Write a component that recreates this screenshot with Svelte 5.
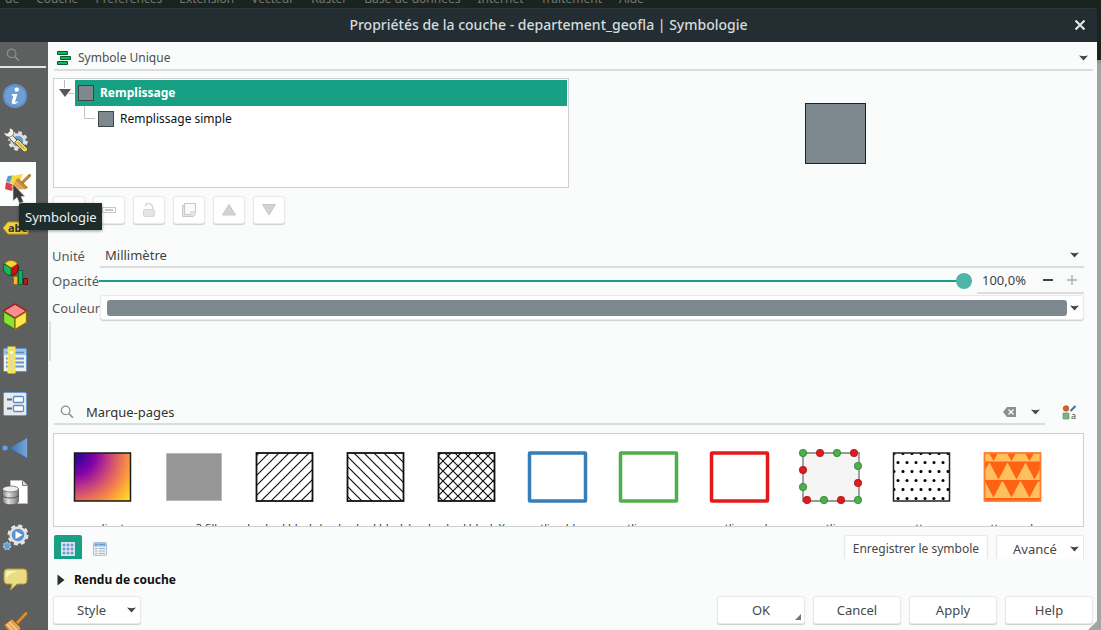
<script>
  const menus = ['de', 'Couche', 'Préférences', 'Extension', 'Vecteur', 'Raster', 'Base de données', 'Internet', 'Traitement', 'Aide'];
  const tabs = [
    ['info', 'Information'],
    ['source', 'Source'],
    ['symbology', 'Symbologie'],
    ['labels', 'Étiquettes'],
    ['diagrams', 'Diagrammes'],
    ['view3d', 'Vue 3D'],
    ['fields', 'Champs'],
    ['form', 'Formulaire'],
    ['joins', 'Jointures'],
    ['storage', 'Stockage auxiliaire'],
    ['actions', 'Actions'],
    ['display', 'Infobulles'],
    ['rendering', 'Rendu']
  ];
  const tools = [
    ['add', 'Ajouter'],
    ['remove', 'Supprimer'],
    ['lock', 'Verrouiller'],
    ['copy', 'Dupliquer'],
    ['up', 'Monter'],
    ['down', 'Descendre']
  ];
  const symbols = [
    ['gradient', 'gradient'],
    ['gray', 'gray 3 fill'],
    ['slash', 'hashed black /'],
    ['back', 'hashed black \\'],
    ['cross', 'hashed black X'],
    ['blue', 'outline blue'],
    ['green', 'outline green'],
    ['red', 'outline red'],
    ['markers', 'outline'],
    ['dots', 'pattern'],
    ['triangles', 'pattern zebra']
  ];
  const outlines = { blue: '#377eb8', green: '#4daf4a', red: '#e31a1c' };
  const greenDots = [[5, 5], [39, 5], [60, 18], [5, 39], [26, 52], [60, 52]];
  const redDots = [[22, 5], [56, 5], [60, 35], [5, 22], [9, 52], [43, 52]];
  let current = $state('symbology');
  let unit = $state('Millimètre');
  let opacity = $state(100);
  let search = $state('Marque-pages');
  let opacityText = $derived(Number(opacity).toFixed(1).replace('.', ',') + '%');
</script>

{#snippet arrow()}
  <svg class="arrow" width="9" height="6" viewBox="0 0 9 6" aria-hidden="true"><path d="M0 .5 4.5 1.2 9 .5 4.5 5.5z" fill="#454545" /></svg>
{/snippet}

{#snippet magnifier(color)}
  <svg width="14" height="14" viewBox="0 0 14 14" fill="none" stroke={color} aria-hidden="true"><circle cx="5.6" cy="5.4" r="4.3" stroke-width="1.2" /><path d="m8.8 8.6 4.2 4.2" stroke-width="1.5" /></svg>
{/snippet}

{#snippet tabIcon(name)}
  <svg width="30" height="28" viewBox="0 0 30 28" aria-hidden="true">
    {#if name === 'info'}
      <circle cx="14" cy="14" r="12" fill="#6d9fd6" />
      <circle cx="14" cy="14" r="11" fill="none" stroke="#5288c4" />
      <circle cx="15.8" cy="7.6" r="2.2" fill="#fff" />
      <path d="M11 12h5.4l-2.2 7.6c-.1.9.7.7 2-.4l.8.8c-2 2.4-6.800 3.300-6.200-.6l1.600-5.600H10.600z" fill="#fff" />
    {:else if name === 'source'}
      <circle cx="17" cy="15" r="8.500" fill="none" stroke="#e4e4e4" stroke-width="2.500" stroke-dasharray="3.700 2.980" />
      <circle cx="17" cy="15" r="6.500" fill="#6b9bd3" stroke="#dedede" stroke-width="2.500" />
      <path d="m7.500 8 9 10" stroke="#444" stroke-width="5" />
      <path d="m7.500 8 9 10" stroke="#efefeb" stroke-width="3.600" />
      <path d="M8 2.200C12 2 14 5.500 12 9c-2 3-7 2.500-8.300-.5L2.500 6l3.500 1.500L8.800 5z" fill="#f2f2ee" stroke="#4a4a4a" stroke-width=".6" />
      <path d="m13.500 16.500 3.500-3.500 9.500 9.500-.5 3-3 .5z" fill="#efd673" stroke="#5f5020" stroke-width=".9" />
      <path d="m16.500 16 7 7" stroke="#a98c35" />
    {:else if name === 'symbology'}
      <path d="m7 6 5-.5L9 13l-4-2z" fill="#5b9bd5" />
      <path d="M11 6 22 4l-5 12-8-3z" fill="#f5da3c" />
      <path d="m5 12 8 3-2 6-7-2z" fill="#de3c49" />
      <path d="M21 13 28.500 5.500" stroke="#a86f28" stroke-width="3" stroke-linecap="round" />
      <path d="M21 13 28.500 5.500" stroke="#c98f47" stroke-width="1.500" stroke-linecap="round" />
      <path d="m17 8.500 9.500 9-2.500 1.500-9-8z" fill="#c98b3d" stroke="#8e5d1e" stroke-width=".6" />
      <path d="m15 10.500 9 8.500-9 1-5-3z" fill="#e2a755" />
    {:else if name === 'labels'}
      <path d="M2 14 7 8h20v12H7z" fill="#f2d43c" stroke="#c29a1c" />
      <text x="7" y="18" font-size="11" font-weight="700" fill="#333">abc</text>
    {:else if name === 'diagrams'}
      <circle cx="10" cy="10" r="7.500" fill="#cc1016" stroke="#54100c" />
      <path d="M10 10 3.500 6A7.500 7.500 0 0 1 16.500 6z" fill="#fad33b" stroke="#86670c" stroke-width=".8" />
      <path d="M10 10V17.500A7.500 7.500 0 0 1 3.500 6z" fill="#16b95c" stroke="#0a5a2c" stroke-width=".8" />
      <path d="M12.500 18.500h4v8h-4z" fill="#fab52d" stroke="#9c6711" />
      <path d="M17.500 12.500h4v14h-4z" fill="#0db35f" stroke="#07693a" />
      <path d="M22.500 20.500h4v6h-4z" fill="#c31420" stroke="#6e0a10" />
    {:else if name === 'view3d'}
      <path d="m14 2 11.500 7L14 16 2.500 9z" fill="#f78d91" stroke="#a40d13" stroke-width="1.300" />
      <path d="M2.500 9.500 14 16.500v11L2.500 20.500z" fill="#8ae234" stroke="#39780b" stroke-width="1.300" />
      <path d="M25.500 9.500 14 16.500v11l11.500-7z" fill="#fbe74e" stroke="#8c6d0b" stroke-width="1.300" />
    {:else if name === 'fields'}
      <rect x="2.500" y="2.500" width="23" height="23" rx="1" fill="#eef0f0" stroke="#5f93cb" />
      <path d="M3 3h22v6H3z" fill="#9fc5e8" />
      <path d="M5 6.500h18" stroke="#5a8ac0" stroke-width="1.500" />
      <path d="M5 12.500h18M5 16.500h18M5 20.500h18" stroke="#6b94c4" stroke-width="1.800" />
      <path d="M7.500 1.500h6v25h-6z" fill="#e7dc9b" stroke="#f6ea4b" stroke-width="2" />
      <circle cx="10.500" cy="6.500" r="1.500" fill="#fff" />
    {:else if name === 'form'}
      <rect x="2.500" y="2.500" width="23" height="23" rx="1.500" fill="#e9eaea" stroke="#6e9bcd" />
      <path d="M6 9.500h5M6 18.500h5" stroke="#4b6a8f" stroke-width="2" />
      <rect x="12.500" y="6.500" width="10" height="6" rx="1" fill="#fff" stroke="#5b8cc4" stroke-width="1.300" />
      <rect x="12.500" y="15.500" width="10" height="6" rx="1" fill="#fff" stroke="#5b8cc4" stroke-width="1.300" />
    {:else if name === 'joins'}
      <circle cx="4" cy="14" r="2.800" fill="#6fa0d6" stroke="#3d6fa8" stroke-width=".6" />
      <path d="M8.500 14 26.500 3.500v21z" fill="url(#joinFill)" stroke="#3b6ca4" stroke-width=".8" />
    {:else if name === 'storage'}
      <path d="M9.500 2.500h12l5 5v18h-17z" fill="#fff" stroke="#b9b9b9" />
      <path d="M21.500 2.500v5h5" fill="#ddd" stroke="#777" />
      <path d="M1.500 11v12c0 5 16 5 16 0V11z" fill="url(#dbFill)" stroke="#555" stroke-width=".8" />
      <ellipse cx="9.500" cy="11" rx="8" ry="3" fill="#eee" stroke="#666" stroke-width=".8" />
      <path d="M1.500 17c0 4 16 4 16 0" fill="none" stroke="#555" />
    {:else if name === 'actions'}
      <circle cx="17" cy="13" r="9" fill="none" stroke="#e6e6e6" stroke-width="3" stroke-dasharray="4 3.070" />
      <circle cx="17" cy="13" r="7.500" fill="#5d91cd" stroke="#e2e2e2" stroke-width="2.500" />
      <path d="m14.500 9 7 4-7 4z" fill="#fff" />
      <circle cx="6" cy="24" r="3.500" fill="#6a9bd1" stroke="#a8c5e4" stroke-width="1.500" stroke-dasharray="2 1" />
    {:else if name === 'display'}
      <path d="M6 3h17q3 0 3 4v7q0 4-3 4h-7l-6.500 6 1.500-6H6q-3 0-3-4V7q0-4 3-4z" fill="#e9dc83" stroke="#b29d36" />
      <path d="M5 13V8q0-3 3-3h12q-11 0-15 8z" fill="#fff9d6" opacity=".75" />
    {:else}
      <path d="M16.500 12.500 25 3.500" stroke="#b56a1c" stroke-width="3.500" stroke-linecap="round" />
      <path d="M16.500 12.500 25 3.500" stroke="#e99b42" stroke-width="1.800" stroke-linecap="round" />
      <path d="m11 9 9 9-6 8Q8 22 3 15z" fill="#e5a050" stroke="#9a5c18" />
      <path d="m8 12 9 9M6 14l8 9" stroke="#f8d19b" stroke-width="1.300" />
    {/if}
  </svg>
{/snippet}

{#snippet toolIcon(name)}
  <svg width="16" height="16" viewBox="0 0 16 16" fill="#e4e5e5" stroke="#c6c8c8" aria-hidden="true">
    {#if name === 'add'}
      <path d="M6 1.500h4V6h4.500v4H10v4.500H6V10H1.500V6H6z" />
    {:else if name === 'remove'}
      <path d="M1.500 5.500h13v5h-13z" fill="#fff" /><path d="M4 8h8" stroke-width="2" />
    {:else if name === 'lock'}
      <path d="M4.500 4.500c0-5 8-4 7 3" fill="none" stroke="#d6d8d8" stroke-width="1.500" /><rect x="2.500" y="7.500" width="11" height="7" rx="1.500" stroke="#d6d8d8" />
    {:else if name === 'copy'}
      <path d="M1.500 3.500v11h11v-2h-9v-9z" /><path d="M3.500 1.500h11v11h-11z" fill="#fafafa" /><path d="M9.500 9.500h4.500v4H9.500z" stroke="#dcdede" />
    {:else if name === 'up'}
      <path d="M8 2.500 14.500 13h-13z" fill="#d2d4d4" />
    {:else}
      <path d="M8 13 14.500 2.500h-13z" fill="#d2d4d4" />
    {/if}
  </svg>
{/snippet}

<svg class="defs" width="0" height="0" aria-hidden="true">
  <defs>
    <linearGradient id="joinFill"><stop offset="0" stop-color="#3f74b0" /><stop offset="1" stop-color="#76a7dc" /></linearGradient>
    <linearGradient id="dbFill"><stop offset="0" stop-color="#777" /><stop offset=".35" stop-color="#e4e4e4" /><stop offset="1" stop-color="#777" /></linearGradient>
    <radialGradient id="plasma" gradientUnits="userSpaceOnUse" cx="4" cy="6" r="71">
      <stop offset="0" stop-color="#1b0a8c" /><stop offset=".13" stop-color="#47039f" /><stop offset=".3" stop-color="#8404a7" />
      <stop offset=".46" stop-color="#b93389" /><stop offset=".6" stop-color="#dc5e66" /><stop offset=".74" stop-color="#f48849" />
      <stop offset=".87" stop-color="#fdb32f" /><stop offset="1" stop-color="#f7e225" />
    </radialGradient>
    <pattern id="slash" width="10" height="10" patternUnits="userSpaceOnUse" x="4" y="8"><path d="M-1 11 11-1M-1 1 1-1M9 11l2-2" stroke="#111" stroke-width="1.200" /></pattern>
    <pattern id="back" width="10" height="10" patternUnits="userSpaceOnUse" x="4" y="8"><path d="M-1-1 11 11M9-1l2 2M-1 9l2 2" stroke="#111" stroke-width="1.200" /></pattern>
    <pattern id="dots" width="9" height="18" patternUnits="userSpaceOnUse" x="4" y="5"><circle cx="5" cy="9.500" r="1.500" /><circle cx="1" cy=".5" r="1.500" /><circle cx="10" cy=".5" r="1.500" /><circle cx="1" cy="18.500" r="1.500" /><circle cx="10" cy="18.500" r="1.500" /></pattern>
    <clipPath id="tile"><rect x="4" y="5" width="57" height="48" /></clipPath>
  </defs>
</svg>

<div class="desktop">
  <nav class="menubar" aria-label="Menu principal">
    {#each menus as m}<span>{m}</span>{/each}
  </nav>
  <div class="window">
    <header>
      <h1>Propriétés de la couche - departement_geofla | Symbologie</h1>
      <button class="close" aria-label="Fermer"><svg width="12" height="12" viewBox="0 0 12 12"><path d="m1.500 1.500 9 9m0-9-9 9" stroke="#dfe5e8" stroke-width="2.200" /></svg></button>
    </header>
    <div class="body">
      <aside>
        <div class="find">{@render magnifier('#8f9190')}<input aria-label="Rechercher" /></div>
        {#each tabs as [id, label]}
          <button class="tab" class:on={current === id} aria-label={label} onclick={() => (current = id)}>{@render tabIcon(id)}</button>
        {/each}
        <div class="tip" role="tooltip">Symbologie</div>
        <svg class="pointer" width="15" height="22" viewBox="0 0 15 22" aria-hidden="true"><path d="M1 1v17l4-3.500 2.500 6 4-1.500-2.300-5.500H13z" fill="#3c3c3c" stroke="#e8e8e8" stroke-width=".6" /></svg>
      </aside>

      <main>
        <div class="combo renderer">
          <svg width="14" height="14" viewBox="0 0 14 14" fill="#12b65c" stroke="#0b5a30" aria-hidden="true"><path d="M.5.500h10v3H.5zM3.500 5.500h10v3h-10zM.5 10.500h10v3H.5z" /></svg>
          <select aria-label="Type de symbole"><option>Symbole Unique</option></select>
          {@render arrow()}
        </div>

        <section class="top">
          <ul class="tree" role="tree">
            <li class="root" role="treeitem" aria-selected="true">
              <span class="branch"><svg width="21" height="26" viewBox="0 0 21 26" aria-hidden="true"><path d="M11.500 0v8M16 13.500h5" stroke="#bbb" /><path d="M6 9h12l-6 8z" fill="#575757" /></svg></span>
              <span class="row"><i class="swatch"></i>Remplissage</span>
            </li>
            <li class="child" role="treeitem" aria-selected="false">
              <svg width="12" height="26" viewBox="0 0 12 26" aria-hidden="true"><path d="M.5 0v12.500H11" fill="none" stroke="#c4c4c4" /></svg>
              <i class="swatch"></i>Remplissage simple
            </li>
          </ul>
          <div class="preview"><div class="square"></div></div>
        </section>

        <div class="tools">
          {#each tools as [id, label]}<button class="btn" aria-label={label} disabled>{@render toolIcon(id)}</button>{/each}
        </div>

        <section class="form">
          <label for="unit">Unité</label>
          <div class="combo">
            <select id="unit" bind:value={unit}><option>Millimètre</option><option>Pixels</option></select>
            {@render arrow()}
          </div>
          <label for="opacity">Opacité</label>
          <div class="opacity">
            <input id="opacity" type="range" min="0" max="100" bind:value={opacity} />
            <div class="spin">
              <input aria-label="Opacité en pourcentage" value={opacityText} />
              <button aria-label="Diminuer" onclick={() => (opacity = Math.max(0, opacity - 1))}><svg width="10" height="10" viewBox="0 0 10 10"><path d="M0 5h10" stroke="#444" stroke-width="2" /></svg></button>
              <button aria-label="Augmenter" disabled={opacity >= 100} onclick={() => (opacity += 1)}><svg width="10" height="10" viewBox="0 0 10 10"><path d="M0 5h10M5 0v10" stroke="#aaa" stroke-width="1.300" /></svg></button>
            </div>
          </div>
          <label for="color">Couleur</label>
          <button id="color" class="btn color"><span></span>{@render arrow()}</button>
        </section>

        <div class="space"></div>

        <div class="filter">
          <div class="combo">
            {@render magnifier('#8b8b8b')}
            <input aria-label="Groupe de symboles" bind:value={search} />
            <button aria-label="Effacer" onclick={() => (search = '')}><svg width="13" height="10" viewBox="0 0 13 10"><path d="M4 0h9v10H4L0 5z" fill="#8e9090" /><path d="m5.500 2.500 5 5m0-5-5 5" stroke="#fff" stroke-width="1.200" /></svg></button>
            <button aria-label="Ouvrir la liste">{@render arrow()}</button>
          </div>
          <button class="manager" aria-label="Gestionnaire de style">
            <svg width="15" height="15" viewBox="0 0 15 15"><circle cx="4" cy="3.500" r="2.800" fill="#d2652b" stroke="#9d4518" stroke-width=".6" /><path d="m8.500 6 5-5" stroke="#4c72a4" stroke-width="2.200" /><path d="M1 8h6v6H1z" fill="#80b088" stroke="#5d8f66" stroke-width=".6" /><text x="9" y="14" font-size="9" fill="#444">a</text></svg>
          </button>
        </div>

        <div class="gallery">
          {#each symbols as [id, label]}
            <button class="symbol">
              <svg width="65" height="58" viewBox="0 0 65 58" aria-hidden="true">
                {#if id === 'gradient'}
                  <rect x="4.500" y="5" width="56" height="48" fill="url(#plasma)" stroke="#1a1a1a" stroke-width="1.500" />
                {:else if id === 'gray'}
                  <rect x="5.500" y="5.500" width="55" height="47" fill="#969696" stroke="#bbb" />
                {:else if id === 'slash' || id === 'back'}
                  <rect x="4.500" y="5" width="56" height="48" fill="url(#{id})" stroke="#111" stroke-width="1.800" />
                {:else if id === 'cross'}
                  <rect x="4.500" y="5" width="56" height="48" fill="url(#slash)" />
                  <rect x="4.500" y="5" width="56" height="48" fill="url(#back)" stroke="#111" stroke-width="1.800" />
                {:else if id === 'markers'}
                  <path d="M5 5h56v48H5z" fill="#f5f5f5" stroke="#999" stroke-width="1.800" />
                  {#each greenDots as [x, y]}<circle cx={x} cy={y} r="3.700" fill="#4daf4a" stroke="#2f7a33" stroke-width=".7" />{/each}
                  {#each redDots as [x, y]}<circle cx={x} cy={y} r="3.700" fill="#e31a1c" stroke="#8e1517" stroke-width=".7" />{/each}
                {:else if id === 'dots'}
                  <rect x="4.500" y="5" width="56" height="48" fill="url(#dots)" stroke="#222" stroke-width="1.500" />
                {:else if id === 'triangles'}
                  <g clip-path="url(#tile)">
                    <path d="M4 5h57v48H4z" fill="#ffbf5f" />
                    <g fill="#ff6212">
                      {#each [0, 18, 36] as x}
                        <path d="M{x + 9} 5h9l-4.500 8z" />
                        <path d="M{x + 9.500} 14.500h18l-9 17z" />
                        <path d="M{x + 4.500} 32.500h18l-9 17z" />
                      {/each}
                      <path d="M4 13.500h57v1.500H4zM4 32h57v1.500H4zM4 50h57v3H4zM4 15h5l-5 9z" />
                    </g>
                  </g>
                  <rect x="4.500" y="5" width="56" height="48" fill="none" stroke="#ff7a2e" stroke-width="1.800" />
                {:else}
                  <rect x="4.500" y="5" width="56" height="48" rx=".5" fill="#fff" stroke={outlines[id]} stroke-width="3.500" stroke-linejoin="round" />
                {/if}
              </svg>
              <span>{label}</span>
            </button>
          {/each}
        </div>

        <div class="views">
          <button class="view on" aria-label="Vue en icônes"><svg width="14" height="14" viewBox="0 0 14 14"><path d="M0 0h14v14H0z" fill="#d7e3ef" /><path d="M2 2h2v2H2zm4 0h2v2H6zm4 0h2v2h-2zM2 6h2v2H2zm4 0h2v2H6zm4 0h2v2h-2zM2 10h2v2H2zm4 0h2v2H6zm4 0h2v2h-2z" fill="#6e9bcd" stroke="#6e9bcd" stroke-width=".6" /></svg></button>
          <button class="view" aria-label="Vue en liste"><svg width="14" height="14" viewBox="0 0 14 14"><rect x=".5" y=".5" width="13" height="13" rx="1" fill="#edf0f0" stroke="#a5c3e3" /><path d="M1 1h12v3.500H1z" fill="#9cc0e6" /><path d="M2 2.700h3M6 2.700h6" stroke="#6491c6" /><path d="M2 6.500h2.500M6 6.500h6M2 9h2.500M6 9h6M2 11.500h2.500M6 11.500h6" stroke="#9db4ca" /></svg></button>
          <button class="btn cut save">Enregistrer le symbole</button>
          <button class="btn cut more">Avancé{@render arrow()}</button>
        </div>

        <button class="rendering" aria-expanded="false"><svg width="8" height="12" viewBox="0 0 8 12" aria-hidden="true"><path d="M.5.500 7.500 6 .5 11.500z" fill="#2e2e2e" /></svg>Rendu de couche</button>

        <footer>
          <button class="btn style">Style{@render arrow()}</button>
          <button class="btn ok">OK<svg width="6" height="6" viewBox="0 0 6 6" aria-hidden="true"><path d="M6 0v6H0z" fill="#777" /></svg></button>
          <button class="btn">Cancel</button>
          <button class="btn">Apply</button>
          <button class="btn">Help</button>
        </footer>
        <svg class="grip" width="9" height="9" viewBox="0 0 9 9" aria-hidden="true"><path d="M9 0v9H0z" fill="#a6a6a6" /></svg>
      </main>
    </div>
  </div>
</div>

<style>
  :global(body) { margin: 0; }
  .desktop, .desktop * { box-sizing: border-box; }
  .defs { position: absolute; }
  .desktop {
    height: 100vh; min-height: 560px; overflow: hidden; display: flex; flex-direction: column;
    font: 13px/18px "Noto Sans", sans-serif; color: #3f4242;
    background: linear-gradient(#1b231f 60px, #8f9090 60px, #a2a3a3 66px);
  }
  button, input, select { font: inherit; color: inherit; border: 0; padding: 0; margin: 0; background: none; outline: 0; border-radius: 0; }
  button { display: flex; align-items: center; justify-content: center; }
  svg { display: block; flex: none; }
  .menubar { flex: none; height: 8px; overflow: hidden; display: flex; gap: 17px; align-items: flex-end; padding: 0 5px; color: #727975; background: #1b231f; font-size: 12px; line-height: 18px; }
  .menubar span { white-space: nowrap; }
  .window { flex: 1; min-height: 0; margin-right: 4px; display: flex; flex-direction: column; }
  header { flex: none; height: 34px; display: grid; grid-template-columns: 1fr auto; align-items: center; background: #232d32; border-top: 1px solid #2c383d; border-radius: 0 3px 0 0; padding-bottom: 1px; }
  h1 { margin: 0; font-size: 14px; line-height: 20px; font-weight: 500; color: #d5dcdf; text-align: center; grid-area: 1 / 1 / 2 / 3; }
  .close { grid-area: 1 / 2; margin-right: 11px; }
  .body { flex: 1; min-height: 0; display: flex; overflow: hidden; }
  aside { flex: none; width: 48px; background: #5e605f; position: relative; }
  .find { height: 26px; width: 46px; border-bottom: 2px solid #e3e4e4; padding: 2px 0 0 6px; display: flex; align-items: center; margin-bottom: 6px; }
  .find input { width: 20px; }
  .tab { width: 36px; height: 44px; justify-content: flex-start; padding-left: 1px; }
  .tab.on { background: #fcfdfd; }
  .tip { position: absolute; left: 19px; top: 161px; z-index: 2; background: #1f2c2c; color: #eef2f2; padding: 5px 5px 4px 6px; box-shadow: 0 1px 3px #0006; }
  .pointer { position: absolute; left: 12px; top: 141px; z-index: 3; }

  main { flex: 1; min-width: 0; position: relative; background: #fafcfb; padding: 4px 4px 6px 5px; display: flex; flex-direction: column; }
  .combo { display: flex; align-items: center; height: 25px; border-bottom: 2px solid #dcdddd; position: relative; }
  .combo select { appearance: none; flex: 1; min-width: 0; height: 100%; padding-left: 5px; }
  .combo input { flex: 1; min-width: 0; }
  .renderer { flex: none; margin-left: 1px; padding-left: 3px; color: #4b4e4e; font-size: 12px; }
  .combo.renderer select { padding-left: 7px; }
  .arrow { pointer-events: none; }
  .combo > .arrow { margin-right: 5px; }
  .top { flex: none; margin-top: 7px; display: grid; grid-template-columns: 1fr 1fr; gap: 8px; height: 110px; }
  .tree { margin: 0; padding: 1px; list-style: none; border: 1px solid #cfd0d0; background: #fff; color: #111; font-size: 12px; }
  .tree li { height: 26px; display: flex; align-items: center; }
  .row { flex: 1; height: 26px; display: flex; align-items: center; gap: 6px; padding-left: 3px; background: #18a085; color: #fff; font-weight: 700; }
  .branch { width: 20px; }
  .branch svg { margin-left: -2px; }
  .swatch { width: 16px; height: 16px; background: #7d898e; border: 1px solid #3f4547; }
  .child { gap: 6px; padding-left: 29px; }
  .child svg { margin-right: -4px; }
  .preview { display: grid; place-items: center; }
  .square { width: 61px; height: 61px; background: #7d898e; border: 1px solid #1e2224; }
  .btn { background: #fff; border: 1px solid #e8e9e9; border-radius: 3px; box-shadow: 0 1px 1px #0000002e; height: 28px; color: #444848; }
  .tools { flex: none; display: flex; gap: 8px; margin-top: 8px; }
  .tools .btn { width: 32px; }

  .form { flex: none; margin: 19px 9px 0 0; display: grid; grid-template-columns: 47px 1fr; grid-template-rows: 25px 26px 27px; align-items: center; }
  .form label { white-space: nowrap; color: #555858; margin-left: -1px; }
  .opacity { display: flex; gap: 5px; height: 26px; }
  .opacity > input { flex: 1; min-width: 0; appearance: none; height: 26px; margin-left: -1px; background: linear-gradient(#18a085, #18a085) center / 100% 2px no-repeat; }
  .opacity > input::-webkit-slider-thumb { appearance: none; width: 16px; height: 16px; border-radius: 50%; background: #4fb5aa; }
  .spin { width: 107px; display: flex; align-items: center; gap: 14px; padding: 0 7px 0 5px; border-bottom: 2px solid #dcdddd; }
  .spin input { flex: 1; min-width: 0; width: 40px; margin-right: -9px; }
  .color { height: 25px; width: 100%; padding: 0 4px 0 6px; gap: 3px; }
  .color span { flex: 1; height: 16px; border-radius: 3px; background: #7d898e; }
  .space { flex: 1; min-height: 20px; }
  .space::before { content: ""; display: block; width: 2px; height: 40px; margin-left: -4px; background: #dfe1e0; }

  .filter { flex: none; display: flex; align-items: center; margin-right: 9px; }
  .filter .combo { flex: 1; margin-left: 1px; padding: 0 5px 0 6px; gap: 15px; color: #333; }
  .filter .combo > svg { margin-right: -3px; }
  .manager { width: 39px; padding-left: 9px; }
  .gallery { flex: none; margin: 8px 9px 0 0; height: 94px; border: 1px solid #cfd0d0; background: #fff; display: flex; overflow: hidden; padding: 14px 0 0 3px; }
  .symbol { flex: none; width: 91px; height: 100px; flex-direction: column; justify-content: flex-start; gap: 14px; color: #333; }
  .symbol span { font-size: 11px; line-height: 16px; white-space: nowrap; }

  .views { flex: none; display: flex; height: 24px; margin: 8px 9px 0 1px; gap: 4px; overflow: hidden; }
  .view { width: 28px; height: 28px; border-radius: 2px; }
  .view.on { background: #18a085; }
  .cut { white-space: nowrap; }
  .save { margin-left: auto; padding: 0 8px; font-size: 12px; }
  .more { width: 88px; margin-left: 4px; padding: 0 4px 0 16px; justify-content: space-between; }
  .rendering { flex: none; align-self: flex-start; margin: 10px 0 0 4px; height: 22px; gap: 9px; font-size: 12px; font-weight: 700; color: #111; }
  footer { flex: none; display: flex; gap: 8px; margin-top: 5px; }
  footer .btn { width: 88px; }
  footer .style { margin-right: auto; padding: 0 4px 0 23px; justify-content: space-between; }
  .ok { position: relative; }
  .ok svg { position: absolute; right: 3px; bottom: 3px; }
  .grip { position: absolute; right: 0; bottom: 0; }
</style>
